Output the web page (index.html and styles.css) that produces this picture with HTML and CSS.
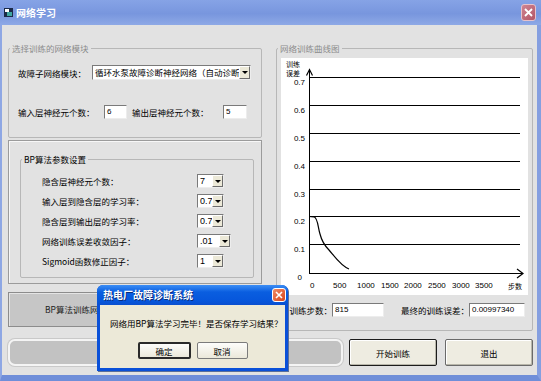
FILE: index.html
```html
<!DOCTYPE html>
<html lang="zh-CN">

<head>
    <meta charset="UTF-8">
    <title>网络学习</title>
    <link rel="stylesheet" href="styles.css">
</head>

<body>
    <div class="window">
        <div class="titlebar">
            <svg class="app-icon" width="9" height="9" viewBox="0 0 9 9">
                <rect x="0" y="0" width="9" height="9" fill="#1b2a48"/>
                <rect x="1" y="1" width="4" height="3" fill="#ffffff"/>
                <rect x="3" y="4" width="5" height="4" fill="#3fa6a0"/>
            </svg>
            <span class="title">网络学习</span>
            <span class="close close-inactive">
                <svg width="9" height="9" viewBox="0 0 9 9"><path d="M1 1 L8 8 M8 1 L1 8" stroke="#fff" stroke-width="1.8"/></svg>
            </span>
        </div>

        <div class="client">
            <div class="main">
                <div class="left">
                    <fieldset class="group g-module">
                        <legend class="muted">选择训练的网络模块</legend>
                        <div class="group-body module-body">
                            <div class="row">
                                <span class="lbl w-module">故障子网络模块：</span>
                                <div class="combo combo-wide">
                                    <span class="combo-val">循环水泵故障诊断神经网络（自动诊断</span>
                                    <span class="combo-btn"></span>
                                </div>
                            </div>
                            <div class="row row-layers">
                                <span class="lbl w-in">输入层神经元个数：</span>
                                <span class="field f-in">6</span>
                                <span class="lbl w-out">输出层神经元个数：</span>
                                <span class="field f-out">5</span>
                            </div>
                        </div>
                    </fieldset>

                    <div class="bp-frame">
                        <fieldset class="group g-bp">
                            <legend>BP算法参数设置</legend>
                            <div class="group-body bp-body">
                                <div class="param">
                                    <span class="lbl w-param">隐含层神经元个数：</span>
                                    <div class="combo combo-sm"><span class="combo-val">7</span><span class="combo-btn"></span></div>
                                </div>
                                <div class="param">
                                    <span class="lbl w-param">输入层到隐含层的学习率：</span>
                                    <div class="combo combo-sm"><span class="combo-val">0.7</span><span class="combo-btn"></span></div>
                                </div>
                                <div class="param">
                                    <span class="lbl w-param">隐含层到输出层的学习率：</span>
                                    <div class="combo combo-sm"><span class="combo-val">0.7</span><span class="combo-btn"></span></div>
                                </div>
                                <div class="param">
                                    <span class="lbl w-param">网络训练误差收敛因子：</span>
                                    <div class="combo combo-md"><span class="combo-val">.01</span><span class="combo-btn"></span></div>
                                </div>
                                <div class="param">
                                    <span class="lbl w-param">Sigmoid函数修正因子：</span>
                                    <div class="combo combo-sm"><span class="combo-val">1</span><span class="combo-btn"></span></div>
                                </div>
                            </div>
                        </fieldset>
                    </div>

                    <div class="status-bar">BP算法训练网络结束，共训练815步</div>
                </div>

                <fieldset class="group g-chart">
                    <legend class="muted">网络训练曲线图</legend>
                    <div class="group-body chart-body">
                        <div class="chart">
                            <svg width="247" height="237" viewBox="0 0 247 237">
                                <g stroke="#000" stroke-width="1" fill="none" shape-rendering="crispEdges">
                                    <line x1="28" y1="19.5" x2="239" y2="19.5"/>
                                    <line x1="28" y1="47.5" x2="239" y2="47.5"/>
                                    <line x1="28" y1="75.5" x2="239" y2="75.5"/>
                                    <line x1="28" y1="103.5" x2="239" y2="103.5"/>
                                    <line x1="28" y1="131.5" x2="239" y2="131.5"/>
                                    <line x1="28" y1="158.5" x2="239" y2="158.5"/>
                                    <line x1="28" y1="186.5" x2="239" y2="186.5"/>
                                    <line x1="28.5" y1="12" x2="28.5" y2="216"/>
                                    <line x1="28" y1="215.5" x2="242" y2="215.5"/>
                                </g>
                                <g stroke="#000" stroke-width="1.2" fill="none">
                                    <path d="M25.5 17.5 L28.5 11.5 L31.5 17.5"/>
                                    <path d="M236 211 L242 215.5 L236 220"/>
                                    <path d="M28 158.5 L33 158.8 C37 160 37 170 39 176 C41 184 44 188 48 192 C54 199 60 208 68 211"/>
                                </g>
                                <text class="axis-cjk" x="5" y="8.5">训练</text>
                                <text class="axis-cjk" x="5" y="17.5">误差</text>
                                <text class="axis-cjk" x="227" y="231">步数</text>
                                <g class="axis-num" text-anchor="end">
                                    <text x="24" y="27">0.7</text>
                                    <text x="24" y="55">0.6</text>
                                    <text x="24" y="83">0.5</text>
                                    <text x="24" y="111">0.4</text>
                                    <text x="24" y="139">0.3</text>
                                    <text x="24" y="166">0.2</text>
                                    <text x="24" y="194">0.1</text>
                                    <text x="21" y="222">0</text>
                                </g>
                                <g class="axis-num">
                                    <text x="29" y="230">0</text>
                                    <text x="52" y="230">500</text>
                                    <text x="76" y="230">1000</text>
                                    <text x="100" y="230">1500</text>
                                    <text x="123" y="230">2000</text>
                                    <text x="147" y="230">2500</text>
                                    <text x="171" y="230">3000</text>
                                    <text x="194" y="230">3500</text>
                                </g>
                            </svg>
                        </div>
                        <div class="row result-row">
                            <span class="lbl w-steps">训练步数：</span>
                            <span class="field f-steps">815</span>
                            <span class="lbl w-err">最终的训练误差：</span>
                            <span class="field f-err">0.00997340</span>
                        </div>
                    </div>
                </fieldset>
            </div>

            <div class="actions">
                <div class="progress"></div>
                <button class="btn btn-default">开始训练</button>
                <button class="btn">退出</button>
            </div>
        </div>

        <!-- 训练完成后的提示框 -->
        <div class="dialog">
            <div class="dlg-title">
                <span class="dlg-caption">热电厂故障诊断系统</span>
                <span class="close close-active">
                    <svg width="8" height="8" viewBox="0 0 8 8"><path d="M1 1 L7 7 M7 1 L1 7" stroke="#fff" stroke-width="1.6"/></svg>
                </span>
            </div>
            <div class="dlg-body">
                <p class="dlg-msg">网络用BP算法学习完毕！是否保存学习结果？</p>
                <div class="dlg-buttons">
                    <button class="dlg-btn dlg-ok">确定</button>
                    <button class="dlg-btn dlg-cancel">取消</button>
                </div>
            </div>
        </div>
    </div>
</body>

</html>
```

FILE: styles.css
```css
* {
    box-sizing: border-box;
}

body {
    margin: 0;
    font-family: "Noto Sans CJK SC", "Liberation Sans", sans-serif;
    font-size: 8.5px;
    color: #000;
    background-color: #e2e2e2;
}

.window {
    position: relative;
    width: 541px;
    height: 381px;
    display: flex;
    flex-direction: column;
    background-color: #e2e2e2;
}

/* title bar */
.titlebar {
    height: 25px;
    display: flex;
    align-items: center;
    padding: 0 5px 0 4px;
    background: linear-gradient(180deg, #86a3e6 0%, #7896de 55%, #8ea9e6 100%);
}

.app-icon {
    flex: none;
}

.title {
    margin-left: 3px;
    color: #fff;
    font-size: 10px;
    font-weight: bold;
    line-height: 12px;
    flex: 1;
}

.close {
    display: flex;
    align-items: center;
    justify-content: center;
    border-radius: 3px;
}

.close-inactive {
    width: 15px;
    height: 17px;
    background: linear-gradient(135deg, #cf8593, #b35565);
    border: 1px solid #e7c2cb;
}

/* client area */
.client {
    flex: 1;
    border-left: 2px solid #8ea7e4;
    border-right: 4px solid #859fe0;
    border-bottom: 6px solid #6f8ed9;
    padding: 17px 4px 0 6px;
}

.main {
    display: grid;
    grid-template-columns: 254px 257px;
    column-gap: 14px;
    height: 289px;
}

.left {
    display: flex;
    flex-direction: column;
}

.group {
    margin: 0;
    padding: 0;
    min-width: 0;
    border: 1px solid #b7b7b7;
    border-radius: 2px;
}

.group legend {
    margin-left: 1px;
    padding: 0 2px;
    line-height: 12px;
}

.muted {
    color: #8b8b8b;
}

.row {
    display: flex;
    align-items: center;
}

.lbl {
    flex: none;
    white-space: nowrap;
    line-height: 12px;
}

.g-module {
    height: 96px;
}

.module-body {
    padding: 11px 0 0 9px;
}

.w-module {
    width: 74px;
}

.row-layers {
    margin-top: 25px;
}

.w-in {
    width: 86px;
}

.w-out {
    width: 91px;
    margin-left: 5px;
}

/* inputs and combos */
.field {
    display: block;
    height: 14px;
    background-color: #fff;
    border: 1px solid;
    border-color: #7a7a7a #ededed #ededed #7a7a7a;
    padding-left: 2px;
    font-family: "Liberation Sans", sans-serif;
    font-size: 8px;
    line-height: 12px;
}

.f-in {
    width: 23px;
}

.f-out {
    width: 24px;
}

.combo {
    display: flex;
    height: 14px;
    background-color: #fff;
    border: 1px solid;
    border-color: #7a7a7a #ededed #ededed #7a7a7a;
}

.combo-val {
    flex: 1;
    overflow: hidden;
    white-space: nowrap;
    padding-left: 2px;
    line-height: 12px;
    font-family: "Liberation Sans", "Noto Sans CJK SC", sans-serif;
    font-size: 9px;
}

.combo-wide {
    width: 159px;
    height: 15px;
}

.combo-wide .combo-val {
    font-family: "Noto Sans CJK SC", sans-serif;
    font-size: 8.5px;
    line-height: 13px;
}

.combo-sm {
    width: 27px;
}

.combo-md {
    width: 34px;
}

.combo-btn {
    flex: none;
    width: 11px;
    display: flex;
    align-items: center;
    justify-content: center;
    background-color: #ece9d8;
    border: 1px solid;
    border-color: #fff #6d6d6d #6d6d6d #fff;
}

.combo-btn::after {
    content: "";
    border-left: 3px solid transparent;
    border-right: 3px solid transparent;
    border-top: 3px solid #000;
}

/* BP parameters */
.bp-frame {
    margin-top: 2px;
    height: 144px;
    padding: 12px 7px 0 11px;
    border: 1px solid #9b9b9b;
    box-shadow: inset 1px 1px 0 #f7f7f7;
}

.g-bp {
    height: 125px;
}

.bp-body {
    padding: 9px 0 0 21px;
}

.param {
    display: flex;
    height: 20px;
}

.w-param {
    width: 155px;
    padding-top: 1px;
}

.status-bar {
    margin-top: 8px;
    height: 35px;
    padding-left: 36px;
    line-height: 33px;
    white-space: nowrap;
    overflow: hidden;
    background-color: #c6c6c6;
    border: 1px solid #8c8c8c;
    box-shadow: inset 1px 1px 0 #e4e4e4;
    color: #222;
}

/* chart */
.g-chart {
    height: 289px;
}

.chart-body {
    padding: 4px 4px 0 4px;
}

.chart {
    height: 237px;
    background-color: #fff;
}

.chart svg {
    display: block;
}

.axis-num {
    font-family: "Liberation Sans", sans-serif;
    font-size: 8px;
    fill: #000;
}

.axis-cjk {
    font-family: "Noto Sans CJK SC", sans-serif;
    font-size: 7px;
    fill: #000;
}

.result-row {
    margin-top: 8px;
}

.w-steps {
    width: 51px;
    text-align: right;
}

.f-steps {
    width: 52px;
}

.w-err {
    width: 85px;
    text-align: right;
}

.f-err {
    width: 56px;
}

/* bottom buttons */
.actions {
    display: flex;
    margin-top: 8px;
    height: 27px;
}

.progress {
    width: 335px;
    background-color: #c2c2c2;
    border: 2px solid #f4f4f4;
    border-radius: 7px;
    box-shadow: 0 0 0 1px #c9c9c9;
}

.btn {
    width: 88px;
    margin-left: 6px;
    padding: 0;
    font-family: "Noto Sans CJK SC", sans-serif;
    font-size: 8.5px;
    background-color: #eeece1;
    border: 1px solid #6a6a6a;
    border-radius: 2px;
    box-shadow: inset -1px -1px 0 #b8b6aa, inset 1px 1px 0 #fff;
}

.btn-default {
    border-color: #1c1c1c;
}

.btn + .btn {
    margin-left: 8px;
}

/* message box */
.dialog {
    position: absolute;
    left: 97px;
    top: 285px;
    width: 191px;
    height: 86px;
    display: flex;
    flex-direction: column;
    background-color: #0a50d8;
    border-radius: 6px 6px 0 0;
    box-shadow: 1px 1px 0 #5a6f9a;
}

.dlg-title {
    height: 20px;
    display: flex;
    align-items: center;
    padding: 0 2px 0 6px;
    border-radius: 6px 6px 0 0;
    background: linear-gradient(180deg, #3c8ef5 0%, #0a5ee0 35%, #0656db 80%, #0a4fcf 100%);
}

.dlg-caption {
    flex: 1;
    color: #fff;
    font-size: 10px;
    font-weight: bold;
    line-height: 12px;
    text-shadow: 1px 1px 0 #0b2c7a;
}

.close-active {
    width: 14px;
    height: 14px;
    background: linear-gradient(135deg, #f08a64, #d8461c);
    border: 1px solid #fff;
}

.dlg-body {
    flex: 1;
    margin: 0 3px 3px 3px;
    padding: 12px 0 0 10px;
    background-color: #ece9d8;
}

.dlg-msg {
    margin: 0;
    line-height: 12px;
    white-space: nowrap;
}

.dlg-buttons {
    display: flex;
    justify-content: center;
    gap: 6px;
    margin: 13px 10px 0 0;
}

.dlg-btn {
    height: 17px;
    padding: 0;
    font-family: "Noto Sans CJK SC", sans-serif;
    font-size: 8.5px;
    background: linear-gradient(180deg, #fdfdfb, #ebe8da);
    border: 1px solid #7b7b7b;
    border-radius: 2px;
}

.dlg-ok {
    width: 53px;
    border: 2px solid #2a2a2a;
}

.dlg-cancel {
    width: 51px;
}
```
